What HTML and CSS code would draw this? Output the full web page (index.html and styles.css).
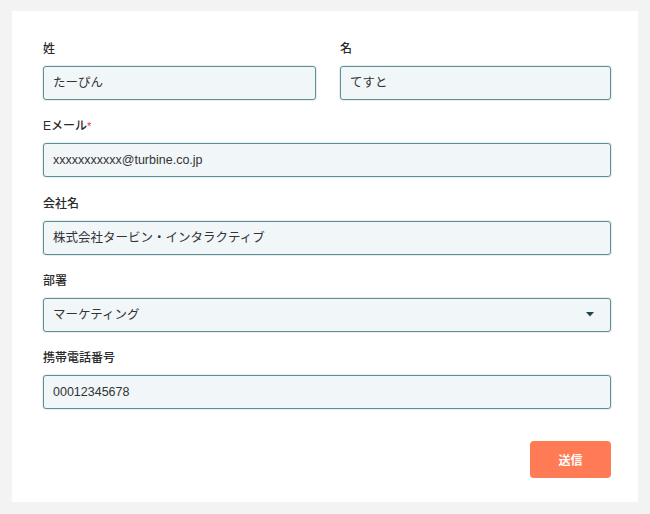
FILE: index.html
```html
<!DOCTYPE html>
<html lang="ja">
<head>
<meta charset="utf-8">
<link rel="stylesheet" href="styles.css">
</head>
<body>
<form class="card">
  <div class="row">
    <div class="field">
      <label class="label">姓</label>
      <div class="input">たーぴん</div>
    </div>
    <div class="field">
      <label class="label">名</label>
      <div class="input">てすと</div>
    </div>
  </div>
  <div class="field">
    <label class="label">Eメール<span class="req">*</span></label>
    <div class="input">xxxxxxxxxxx@turbine.co.jp</div>
  </div>
  <div class="field">
    <label class="label">会社名</label>
    <div class="input">株式会社タービン・インタラクティブ</div>
  </div>
  <div class="field">
    <label class="label">部署</label>
    <div class="input select">
      <span>マーケティング</span>
      <svg class="caret" width="8" height="5" viewBox="0 0 8 5"><path d="M0 0H8L4 4.5Z" fill="#1e4650"/></svg>
    </div>
  </div>
  <div class="field">
    <label class="label">携帯電話番号</label>
    <div class="input">00012345678</div>
  </div>
  <div class="actions">
    <button type="button" class="submit">送信</button>
  </div>
</form>
</body>
</html>
```
FILE: styles.css
```css
html, body {
  margin: 0;
  padding: 0;
  background: #f3f3f3;
}
body {
  font-family: "Liberation Sans", "Noto Sans CJK JP", sans-serif;
  color: #333;
  padding: 11px 12px 12px 12px;
}
.card {
  box-sizing: border-box;
  width: 626px;
  height: 491px;
  background: #fff;
  padding: 28px 27px 0 31px;
  display: flex;
  flex-direction: column;
  gap: 16.3px;
}
.row {
  display: grid;
  grid-template-columns: 273px 271px;
  column-gap: 24px;
}
.field {
  display: flex;
  flex-direction: column;
}
.label {
  display: block;
  font-size: 12px;
  line-height: 21px;
  height: 21px;
  font-weight: 500;
  color: #2a2a2a;
  margin-bottom: 6px;
}
.req {
  color: #e0334a;
  font-size: 11px;
}
.input {
  box-sizing: border-box;
  height: 34px;
  border: 1px solid #5f8f94;
  border-radius: 3px;
  background: #f1f6f9;
  padding: 0 9px;
  font-size: 12.5px;
  line-height: 32px;
  color: #333;
  box-shadow: 0 0 0 1px rgba(95, 143, 148, 0.15);
}
.select {
  display: flex;
  align-items: center;
  justify-content: space-between;
  padding-right: 16px;
}
.caret {
  display: block;
}
.actions {
  display: flex;
  justify-content: flex-end;
  margin-top: 16px;
}
.submit {
  width: 81px;
  height: 37px;
  border: none;
  border-radius: 4px;
  background: #ff7b56;
  color: #fff;
  font-family: "Noto Sans CJK JP", sans-serif;
  font-weight: 700;
  font-size: 12px;
  cursor: pointer;
}
```
